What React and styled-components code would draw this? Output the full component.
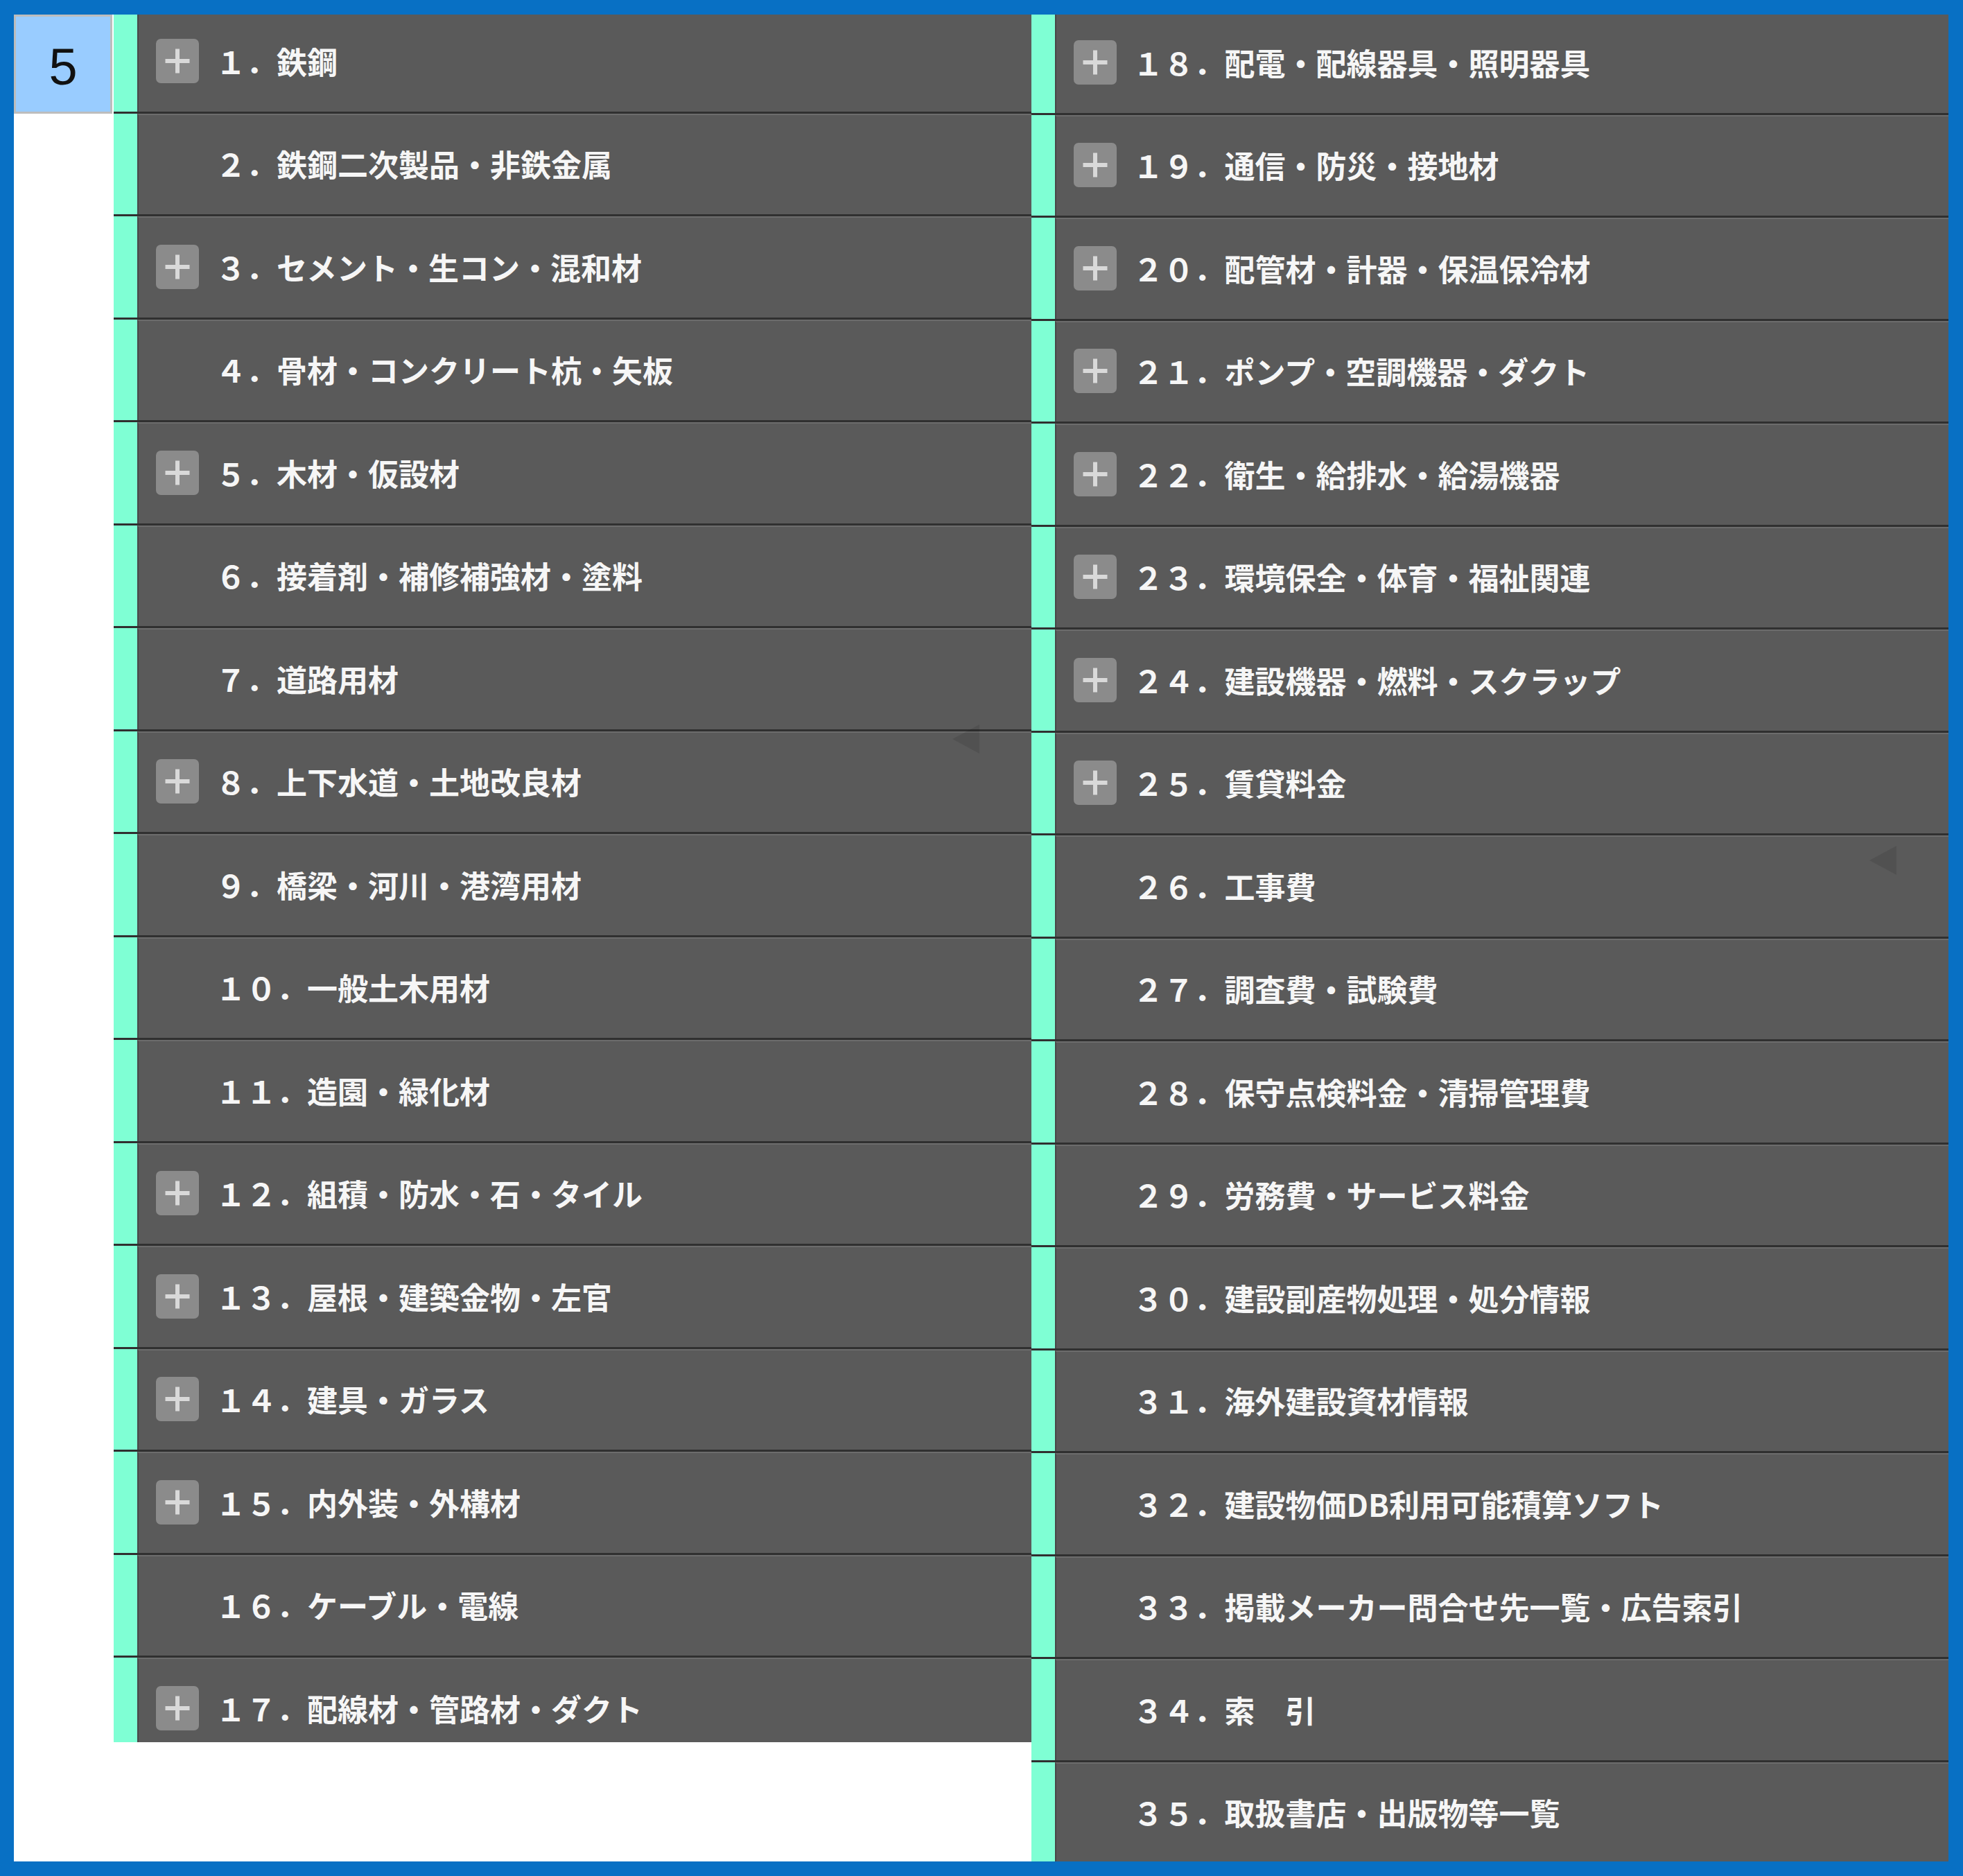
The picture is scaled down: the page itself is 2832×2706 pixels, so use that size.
import React from "react";
import styled, { createGlobalStyle } from "styled-components";

const GlobalStyle = createGlobalStyle`
  html, body { margin: 0; padding: 0; }
  body {
    background: #0870c4;
    font-family: "Noto Sans CJK JP", "Noto Sans", sans-serif;
  }
`;

const Frame = styled.div`
  width: 2832px;
  height: 2706px;
  box-sizing: border-box;
  padding: 21px 21px 21px 20px;
  background: #0870c4;
`;

const Viewport = styled.div`
  width: 2791px;
  height: 2664px;
  background: #ffffff;
  overflow: hidden;
  display: flex;
  align-items: flex-start;
`;

const Side = styled.div`
  width: 144px;
  flex: none;
`;

const NumberBox = styled.div`
  width: 142px;
  height: 143px;
  box-sizing: border-box;
  border: 3px solid #bdbdbd;
  background: #99ccff;
  display: flex;
  align-items: center;
  justify-content: center;
  padding-top: 8px;
  font-family: "Liberation Sans", Arial, sans-serif;
  font-size: 74px;
  color: #111;
`;

const Column = styled.div`
  position: relative;
  flex: 1 1 0;
  min-width: 0;
  margin-top: ${(p) => p.$shift}px;
  height: ${(p) => (p.$clip ? `${p.$clip}px` : "auto")};
  overflow: hidden;
`;

const Row = styled.div`
  display: flex;
  height: 148.5px;
  box-sizing: border-box;
  border-bottom: 3px solid #303030;
`;

const Stripe = styled.div`
  width: 34px;
  flex: none;
  background: #7fffd4;
`;

const Body = styled.div`
  flex: 1;
  display: flex;
  align-items: center;
  gap: 24px;
  padding-left: 25px;
  background: #5a5a5a;
  border-top: 2px solid #6c6c6c;
  border-left: 2px solid #474747;
`;

const Expand = styled.span`
  position: relative;
  width: 62px;
  height: 64px;
  flex: none;
  border-radius: 7px;
  background: #8b8b8b;
  margin-top: -2px;

  &::before,
  &::after {
    content: "";
    position: absolute;
    left: 50%;
    top: 50%;
    transform: translate(-50%, -50%);
    background: #d9d9d9;
  }
  &::before {
    width: 35px;
    height: 6px;
  }
  &::after {
    width: 6px;
    height: 35px;
  }
`;

const IconSpacer = styled.span`
  width: 62px;
  height: 64px;
  flex: none;
`;

const Label = styled.span`
  font-size: 44px;
  font-weight: 700;
  line-height: 1;
  color: #f6f6f6;
  white-space: nowrap;
  margin-top: -2px;
`;

const Arrow = styled.span`
  position: absolute;
  right: 75px;
  top: ${(p) => p.$top}px;
  width: 0;
  height: 0;
  border-top: 21px solid transparent;
  border-bottom: 21px solid transparent;
  border-right: 39px solid rgba(0, 0, 0, 0.09);
  pointer-events: none;
`;

const left = [
  ["１．鉄鋼", true],
  ["２．鉄鋼二次製品・非鉄金属", false],
  ["３．セメント・生コン・混和材", true],
  ["４．骨材・コンクリート杭・矢板", false],
  ["５．木材・仮設材", true],
  ["６．接着剤・補修補強材・塗料", false],
  ["７．道路用材", false],
  ["８．上下水道・土地改良材", true],
  ["９．橋梁・河川・港湾用材", false],
  ["１０．一般土木用材", false],
  ["１１．造園・緑化材", false],
  ["１２．組積・防水・石・タイル", true],
  ["１３．屋根・建築金物・左官", true],
  ["１４．建具・ガラス", true],
  ["１５．内外装・外構材", true],
  ["１６．ケーブル・電線", false],
  ["１７．配線材・管路材・ダクト", true],
];

const right = [
  ["１８．配電・配線器具・照明器具", true],
  ["１９．通信・防災・接地材", true],
  ["２０．配管材・計器・保温保冷材", true],
  ["２１．ポンプ・空調機器・ダクト", true],
  ["２２．衛生・給排水・給湯機器", true],
  ["２３．環境保全・体育・福祉関連", true],
  ["２４．建設機器・燃料・スクラップ", true],
  ["２５．賃貸料金", true],
  ["２６．工事費", false],
  ["２７．調査費・試験費", false],
  ["２８．保守点検料金・清掃管理費", false],
  ["２９．労務費・サービス料金", false],
  ["３０．建設副産物処理・処分情報", false],
  ["３１．海外建設資材情報", false],
  ["３２．建設物価DB利用可能積算ソフト", false],
  ["３３．掲載メーカー問合せ先一覧・広告索引", false],
  ["３４．索　引", false],
  ["３５．取扱書店・出版物等一覧", false],
];

function Item({ label, expandable }) {
  return (
    <Row>
      <Stripe />
      <Body>
        {expandable ? <Expand /> : <IconSpacer />}
        <Label>{label}</Label>
      </Body>
    </Row>
  );
}

export default function App() {
  return (
    <>
      <GlobalStyle />
      <Frame>
        <Viewport>
          <Side>
            <NumberBox>5</NumberBox>
          </Side>
          <Column $shift={-6} $clip={2498}>
            {left.map(([l, e]) => (
              <Item key={l} label={l} expandable={e} />
            ))}
            <Arrow $top={1030} />
          </Column>
          <Column $shift={-4}>
            {right.map(([l, e]) => (
              <Item key={l} label={l} expandable={e} />
            ))}
            <Arrow $top={1203} />
          </Column>
        </Viewport>
      </Frame>
    </>
  );
}
